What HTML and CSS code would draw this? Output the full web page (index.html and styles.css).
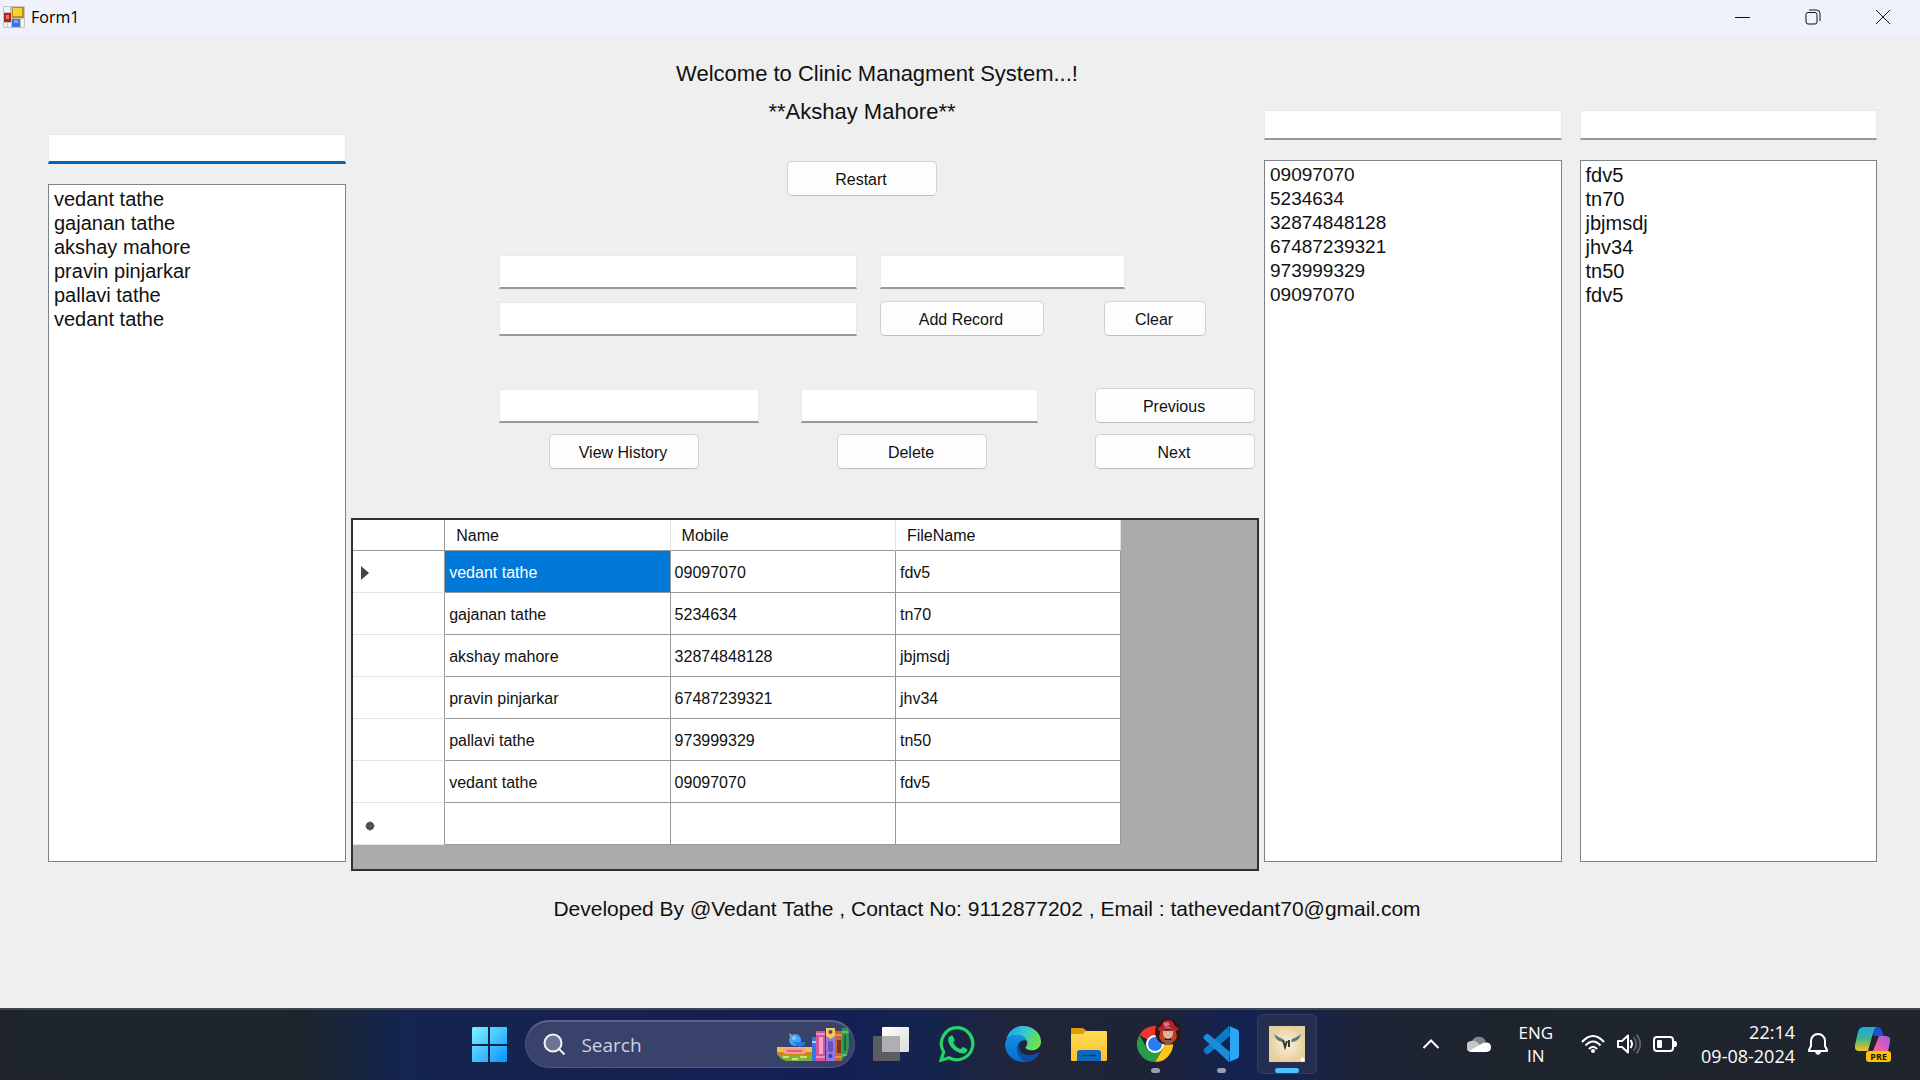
FILE: index.html
```
<!DOCTYPE html>
<html lang="en">
<head>
<meta charset="utf-8">
<meta name="viewport" content="width=device-width, initial-scale=1">
<title>Form1</title>
<link rel="stylesheet" href="styles.css">
</head>
<body>
<header class="titlebar">
  <svg class="app-icon" viewBox="0 0 22 22" aria-hidden="true">
    <rect width="22" height="22" rx="1" fill="#c3c5c8"/>
    <rect x="1" y="1" width="6" height="5" fill="#eef1f5"/>
    <rect x="1" y="7" width="7" height="9" fill="#b3251c"/><rect x="3" y="9" width="3" height="4" fill="#e07868"/>
    <rect x="9" y="1" width="12" height="11" fill="#c98a10"/><rect x="10" y="2" width="9" height="8" fill="#fbd033"/>
    <rect x="9" y="13" width="8" height="8" fill="#3f74d8"/><rect x="11" y="14" width="4" height="3" fill="#79a8f2"/>
    <rect x="1" y="17" width="3" height="4" fill="#eef1f5"/><rect x="5" y="17" width="3" height="4" fill="#eef1f5"/>
    <rect x="18" y="13" width="3" height="8" fill="#eef1f5"/>
  </svg>
  <h1 class="window-title">Form1</h1>
  <div class="window-controls">
    <button class="window-button" type="button" aria-label="Minimize"><svg viewBox="0 0 16 16"><path d="M0 8.500h15"/></svg></button>
    <button class="window-button" type="button" aria-label="Restore"><svg viewBox="0 0 16 16"><rect x="1" y="3.500" width="11" height="11.500" rx="2"/><path d="M4 1h7.500a3.500 3.500 0 0 1 3.500 3.500V12"/></svg></button>
    <button class="window-button" type="button" aria-label="Close"><svg viewBox="0 0 16 16"><path d="M1 1l14 14M15 1L1 15"/></svg></button>
  </div>
</header>

<main class="form">
  <div class="panels">
    <section class="search-list search-list-name">
      <input class="field field-search field-active" type="text" aria-label="Search name">
      <select class="listbox" size="20" aria-label="Names">
        <option>vedant tathe</option><option>gajanan tathe</option><option>akshay mahore</option>
        <option>pravin pinjarkar</option><option>pallavi tathe</option><option>vedant tathe</option>
      </select>
    </section>

    <section class="center">
      <div class="controls">
        <h2 class="heading">Welcome to Clinic Managment System...!</h2>
        <div class="intro">
          <p class="heading">**Akshay Mahore**</p>
          <button class="button button-restart" type="button">Restart</button>
        </div>
        <div class="row row-record">
          <input class="field" type="text" aria-label="Name">
          <input class="field" type="text" aria-label="File name">
        </div>
        <div class="row row-add">
          <input class="field" type="text" aria-label="Mobile">
          <button class="button" type="button">Add Record</button>
          <button class="button" type="button">Clear</button>
        </div>
        <div class="row row-lookup">
          <input class="field" type="text" aria-label="History of">
          <input class="field" type="text" aria-label="Record to delete">
          <button class="button" type="button">Previous</button>
        </div>
        <div class="row row-actions">
          <button class="button" type="button">View History</button>
          <button class="button" type="button">Delete</button>
          <button class="button" type="button">Next</button>
        </div>
      </div>

      <div class="datagrid">
        <table class="records">
          <colgroup><col class="col-marker"><col><col><col></colgroup>
          <thead><tr><th></th><th scope="col">Name</th><th scope="col">Mobile</th><th scope="col">FileName</th></tr></thead>
          <tbody>
            <tr><th scope="row"><svg class="marker" viewBox="0 0 8 14" aria-label="Current row"><path d="M0 0l8 7-8 7z"/></svg></th><td class="selected">vedant tathe</td><td>09097070</td><td>fdv5</td></tr>
            <tr><th></th><td>gajanan tathe</td><td>5234634</td><td>tn70</td></tr>
            <tr><th></th><td>akshay mahore</td><td>32874848128</td><td>jbjmsdj</td></tr>
            <tr><th></th><td>pravin pinjarkar</td><td>67487239321</td><td>jhv34</td></tr>
            <tr><th></th><td>pallavi tathe</td><td>973999329</td><td>tn50</td></tr>
            <tr><th></th><td>vedant tathe</td><td>09097070</td><td>fdv5</td></tr>
            <tr><th scope="row"><svg class="marker marker-new" viewBox="0 0 10 10" aria-label="New row"><circle cx="5" cy="5" r="4"/><path d="M5 0v10M0 5h10" stroke="#666" fill="none"/></svg></th><td></td><td></td><td></td></tr>
          </tbody>
        </table>
      </div>
    </section>

    <div class="list-pair">
      <section class="search-list">
        <input class="field field-search" type="text" aria-label="Search mobile">
        <select class="listbox listbox-numbers" size="20" aria-label="Mobiles">
          <option>09097070</option><option>5234634</option><option>32874848128</option>
          <option>67487239321</option><option>973999329</option><option>09097070</option>
        </select>
      </section>
      <section class="search-list">
        <input class="field field-search" type="text" aria-label="Search file name">
        <select class="listbox" size="20" aria-label="File names">
          <option>fdv5</option><option>tn70</option><option>jbjmsdj</option>
          <option>jhv34</option><option>tn50</option><option>fdv5</option>
        </select>
      </section>
    </div>
  </div>
  <p class="credits">Developed By @Vedant Tathe , Contact No: 9112877202 , Email : tathevedant70@gmail.com</p>
</main>

<footer class="taskbar">
  <nav class="apps" aria-label="Taskbar">
    <button class="app" type="button" aria-label="Start">
      <svg viewBox="0 0 36 36"><defs><linearGradient id="win" x1="0" y1="0" x2="1" y2="1"><stop offset="0" stop-color="#7df3ff"/><stop offset="1" stop-color="#0a94ff"/></linearGradient></defs>
      <path fill="url(#win)" d="M2 1h15v17H1V2zM19 1h16a1 1 0 0 1 1 1v16H19zM1 20h16v16H2a1 1 0 0 1-1-1zM19 20h17v15a1 1 0 0 1-1 1H19z"/></svg>
    </button>
    <label class="search">
      <svg class="search-icon" viewBox="0 0 24 24"><circle cx="10" cy="10" r="8.500" fill="#6c7494"/><path d="M16 16l5.500 5.500"/></svg>
      <input class="search-input" type="text" placeholder="Search" aria-label="Search">
      <svg class="search-art" viewBox="0 0 73 34" aria-hidden="true">
        <path d="M0 19h35v8H0z" fill="#f3c04b"/><path d="M0 24h35v3H0z" fill="#c98320"/><rect x="6" y="20" width="23" height="6" rx="3" fill="#f49b94"/><rect x="10" y="22" width="15" height="2" fill="#d96767"/>
        <path d="M1 27h34v6H10Q4 32 1 27z" fill="#7fb23a"/><path d="M6 29h6M15 31h6M23 29h7" stroke="#cfe56a" stroke-width="2"/>
        <path d="M12 5l6 4-4 3z" fill="#f39a2b"/><circle cx="18" cy="12" r="6" fill="#3fa4f5"/><path d="M16 14h12v3l-6 2z" fill="#1f7de0"/><circle cx="17" cy="10" r="2" fill="#84cbff"/>
        <rect x="35" y="9" width="4" height="24" fill="#3778df"/><rect x="35" y="13" width="4" height="2" fill="#a8cdff"/>
        <rect x="39" y="3" width="9" height="30" fill="#d4579c"/><rect x="42" y="9" width="4" height="17" fill="#f5a6cf"/><path d="M39 6h9M39 29h9" stroke="#f6d0e3"/>
        <rect x="49" y="0" width="9" height="33" fill="#9277e6"/><path d="M49 0h9v8l-4.500 3-4.500-3z" fill="#f6cb4f"/><rect x="51" y="13" width="5" height="11" rx="2" fill="#6b50bf"/><circle cx="53.500" cy="4" r="2" fill="#5a3f9a"/><circle cx="53.500" cy="28" r="2" fill="#4c358c"/>
        <rect x="58" y="3" width="7" height="30" fill="#c8692d"/><rect x="60" y="12" width="4" height="13" fill="#7c3a17"/><path d="M58 7h7M58 29h7" stroke="#f4b66c"/>
        <path d="M65 0h6q2 14 0 25l-6 7z" fill="#2f9653"/><path d="M65 4h7M65 27h5" stroke="#a4dca7"/><path d="M67 7h2v16h-2z" fill="#1a6a38"/>
      </svg>
    </label>
    <button class="app" type="button" aria-label="Task view">
      <svg viewBox="0 0 36 36"><defs><linearGradient id="tv" x1="0" y1="0" x2="1" y2="1"><stop offset="0" stop-color="#fff"/><stop offset="1" stop-color="#dcdcdc"/></linearGradient></defs>
      <rect x="0" y="10" width="27" height="25" rx="1" fill="#5c5d60"/><rect x="9" y="1" width="27" height="25" rx="1" fill="url(#tv)"/><path d="M9 10h18v16H9z" fill="#aeafb2"/></svg>
    </button>
    <button class="app" type="button" aria-label="WhatsApp">
      <svg viewBox="0 0 36 36"><path d="M18.500 1.700A16 16 0 0 0 4.700 26L2 34.200l8.300-2.400A16 16 0 1 0 18.500 1.700z" fill="none" stroke="#25d366" stroke-width="3.200"/>
      <path fill="#25d366" d="M9.500 12c1-2.500 3.700-3.400 4.600-1.500l1.500 3.600c.3.900-1.600 2.400-1.200 3 1.600 3 3.900 5 7 6 .8.200 2-2.400 2.800-2l3.800 1.800c1.200.7-.4 3.800-2.700 4.500-3 .8-8.600-1.500-12-5.100-3.300-3.600-4.800-7.800-3.800-10.300z"/></svg>
    </button>
    <button class="app" type="button" aria-label="Edge">
      <svg viewBox="0 0 36 36"><defs><linearGradient id="ea" x1="0" y1="0" x2="1" y2=".4"><stop offset="0" stop-color="#2195e0"/><stop offset=".5" stop-color="#31c4d8"/><stop offset="1" stop-color="#6be34b"/></linearGradient><linearGradient id="eb" x1="0" y1="0" x2="0" y2="1"><stop offset="0" stop-color="#1391e3"/><stop offset="1" stop-color="#0a6bce"/></linearGradient></defs>
      <path fill="url(#ea)" d="M1 14C3 5.500 9.500 0 18 0c10.500 0 18 7.300 18 15.500 0 5.500-4 8.800-9 8.800-4 0-6.500-1.300-6.500-2.700 0-1 1.800-1.700 1.800-4.600C22 13 18 9 12 9 7 9 3 11 1 14z"/>
      <path fill="url(#eb)" d="M0 18C.5 12.500 5.500 8.700 12 8.700c5 0 8.400 2.700 9.700 5.600C16 13.500 12.500 17 12.500 22c0 6 4 11.500 9 13.500-1 .3-2.200.5-3.500.5C8 36 0 28 0 18z"/>
      <path fill="#0f4f9f" d="M14.600 17.500c-2.600 7 4.400 13 12 11.500 3-.6 5-2 6.800-2.800 1-.4 1.300.4.900 1.200C32 32 27 36 21 36c-5-1.500-9.500-7-9-13 .2-2.400 1.200-4.300 2.600-5.500z"/></svg>
    </button>
    <button class="app" type="button" aria-label="File Explorer">
      <svg viewBox="0 0 36 36"><defs><linearGradient id="fo" x1="0" y1="0" x2="0" y2="1"><stop offset="0" stop-color="#ffdb58"/><stop offset="1" stop-color="#fdc02b"/></linearGradient></defs>
      <path fill="#e09d00" d="M0 3a1 1 0 0 1 1-1h10q2 0 3 1.500L16 6v8H0z"/><path fill="url(#fo)" d="M0 8h12l3-3h20a1 1 0 0 1 1 1v28a1 1 0 0 1-1 1H1a1 1 0 0 1-1-1z"/><path fill="#0b69bd" d="M6 35V27q0-3 3-3h18q3 0 3 3v8z"/><path d="M11 29.500h14" stroke="#053f78" stroke-width="1.500"/></svg>
    </button>
    <button class="app app-open" type="button" aria-label="Chrome">
      <svg viewBox="0 0 36 36"><path fill="#e8382c" d="M18 18L2.400 9A18 18 0 0 1 33.600 9z"/><path fill="#fcc417" d="M18 18V9h15.600A18 18 0 0 1 18 36l7.800-13.500z"/><path fill="#2a9b46" d="M2.400 9l7.800 13.500L18 27l7.800-4.500L18 36A18 18 0 0 1 2.400 9z"/><circle cx="18" cy="18" r="9" fill="#fff"/><circle cx="18" cy="18" r="7" fill="#2f7cf0"/></svg>
      <svg class="profile" viewBox="0 0 26 26"><circle cx="13" cy="13" r="13" fill="#2c1714"/><path fill="#ad2330" d="M2 9q5-1 6-6 5-4 10 0 1 5 6 6-2 5-11 5T2 9z"/><path fill="#ee7180" d="M8 4l5-1 2 3-5 2z"/><path d="M6 11q-4 7 1 12l3 1V13zM20 11q4 7-1 12l-3 1V13z" fill="#c53f19"/><ellipse cx="13" cy="14" rx="5" ry="6" fill="#dfb29c"/><path d="M9 10q4-2 8 0v2H9z" fill="#7a2522"/><path d="M8 21h10l-2 5h-6z" fill="#8c5a4c"/></svg>
    </button>
    <button class="app app-open" type="button" aria-label="Visual Studio Code">
      <svg viewBox="0 0 36 36"><path d="M26 0L1 23q-1 1.500 0 3l2 1.700q1.300 1 2.800 0L27 10z" fill="#0a7bc9"/><path d="M26 36L1 13q-1.200-1.500 0-3l2-1.700q1.200-1 2.600 0L27 26z" fill="#1a8cd8"/><path fill="#2ba5f5" d="M26 0l8.500 3.500Q36 4.500 36 6v24q0 1.500-1.500 2.500L26 36q1-1 1-3V3q0-2-1-3z"/></svg>
    </button>
    <button class="app app-current" type="button" aria-label="Form1">
      <svg viewBox="0 0 36 36"><defs><radialGradient id="tile"><stop offset="0" stop-color="#fbf1da"/><stop offset="1" stop-color="#e9cf9e"/></radialGradient></defs>
      <rect width="36" height="36" fill="url(#tile)"/><path fill="#557a8a" d="M5 8q5 4 9 5l1 3q-8 0-10-8zM32 8q-5 4-9 5l-1 3q8 0 10-8z"/><path d="M14 14l2 7 2-6M20 14v7" fill="none" stroke="#38352f" stroke-width="2"/><circle cx="33.500" cy="33.500" r="2" fill="#fff"/></svg>
    </button>
  </nav>

  <div class="tray">
    <button class="tray-button" type="button" aria-label="Show hidden icons"><svg class="icon-chevron" viewBox="0 0 18 12"><path d="M1.500 10L9 2.500l7.500 7.500" fill="none" stroke="#fff" stroke-width="2"/></svg></button>
    <button class="tray-button tray-cloud" type="button" aria-label="OneDrive"><svg class="icon-cloud" viewBox="0 0 24 16"><path fill="#85878b" d="M5 5a7.500 7.500 0 0 1 14 1l-6 5-8-1z"/><path fill="#c6c7c9" d="M5 16a5.300 5.300 0 0 1-1-11q3-1 6 1l9 10z"/><path fill="#fff" d="M2 15l14-8q8-2 8 4.500 0 4-4.500 4.500H5q-2 0-3-1z"/></svg></button>
    <button class="tray-button tray-language" type="button">ENG<br>IN</button>
    <button class="tray-button tray-status" type="button" aria-label="Network, volume and battery">
      <svg class="icon-status" viewBox="0 0 24 20"><g fill="none" stroke="#fff" stroke-width="2"><path d="M1 8q11-12 22 0M4.500 11.500q7.500-8 15 0M8 15q4-4.500 8 0"/></g><circle cx="12" cy="17" r="2" fill="#fff"/></svg>
      <svg class="icon-status" viewBox="0 0 24 20"><path d="M1 7h4l6-5.500v17L5 13H1z" fill="none" stroke="#fff" stroke-width="2" stroke-linejoin="round"/><path d="M13.500 6q3 4 0 8" fill="none" stroke="#fff" stroke-width="2"/><path d="M16.500 3q5.500 7 0 14M19.500 .5q7.500 9.500 0 19" fill="none" stroke="#5b5f67" stroke-width="2"/></svg>
      <svg class="icon-status" viewBox="0 0 24 20"><rect x="1" y="3" width="19" height="14" rx="3" fill="none" stroke="#fff" stroke-width="2"/><rect x="4" y="6" width="5" height="8" rx="1" fill="#fff"/><path d="M21 7h1q2 0 2 3t-2 3h-1z" fill="#fff"/></svg>
    </button>
    <button class="tray-button tray-clock" type="button">22:14<br>09-08-2024</button>
    <button class="tray-button tray-bell" type="button" aria-label="Notifications"><svg class="icon-bell" viewBox="0 0 20 22"><path d="M10 1a7 7 0 0 0-7 7v5l-2 4v1h18v-1l-2-4V8a7 7 0 0 0-7-7z" fill="none" stroke="#fff" stroke-width="2" stroke-linejoin="round"/><path d="M7 19h6q-1 3-3 3t-3-3z" fill="#fff"/></svg></button>
    <button class="tray-button tray-copilot" type="button" aria-label="Copilot preview">
      <svg class="icon-copilot" viewBox="0 0 36 36"><defs><linearGradient id="ca" x1="0" y1="0" x2="0" y2="1"><stop offset="0" stop-color="#1aa7ec"/><stop offset=".5" stop-color="#43b68a"/><stop offset="1" stop-color="#f5c51b"/></linearGradient><linearGradient id="cb" x1="1" y1="0" x2="0" y2="1"><stop offset="0" stop-color="#a259f0"/><stop offset=".6" stop-color="#ec5fa0"/><stop offset="1" stop-color="#fb8b54"/></linearGradient></defs>
      <path fill="#1e4fd0" d="M13 1h9q4 0 5 4l2 5H19z"/><path fill="url(#ca)" d="M9 1h12q-2 2-3 6l-5 18H4q-5 0-4-6L3 6q1-5 6-5z"/><path fill="url(#cb)" d="M24 10h7q5 0 4 6l-3 14H16z"/></svg>
      <span class="preview-badge">PRE</span>
    </button>
  </div>
</footer>
</body>
</html>
```
FILE: styles.css
```
* { box-sizing: border-box; }

body {
  margin: 0;
  min-height: 100vh;
  display: flex;
  flex-direction: column;
  background: #efefef;
  color: #111;
  font-family: "Liberation Sans", Arial, sans-serif;
  font-size: 16px;
}

h1, h2, p { margin: 0; font-weight: 400; }
button, input, select { font: inherit; color: inherit; border-radius: 0; }
svg { display: block; }

/* Title bar */
.titlebar {
  display: flex;
  align-items: center;
  height: 36px;
  padding: 0 2px 2px 3px;
  background: #eff2fa;
  font-family: "Open Sans", "Noto Sans", sans-serif;
}
.app-icon { width: 22px; height: 22px; margin-right: 6px; }
.window-title { font-size: 16px; line-height: 24px; color: #000; }
.window-controls { display: flex; margin-left: auto; }
.window-button {
  display: grid;
  place-items: center;
  width: 70px;
  height: 32px;
  padding: 0;
  border: 0;
  background: none;
}
.window-button svg { width: 16px; height: 16px; fill: none; stroke: #111; stroke-width: 1; }

/* Form body */
.form { flex: 1; }
.panels {
  display: grid;
  grid-template-columns: 298fr 908fr 613fr;
  column-gap: 5px;
  padding: 0 43px 0 48px;
}
.list-pair { display: grid; grid-template-columns: 1fr 1fr; column-gap: 18px; }
.search-list {
  display: flex;
  flex-direction: column;
  gap: 20px;
  padding: 74px 0 9px;
}
.search-list-name { padding-top: 98px; }

.field {
  width: 100%;
  min-width: 0;
  height: 34px;
  padding: 0 6px;
  border: 1px solid #e9e9e9;
  border-bottom: 2px solid #999;
  background: #fff;
  outline: none;
}
.field-search { height: 30px; }
.field-active { border-bottom: 3px solid #0067c0; }

.listbox {
  flex: 1;
  width: 100%;
  min-height: 0;
  padding: 3px;
  border: 1px solid #7d838d;
  background: #fff;
  font-size: 20px;
  overflow: hidden;
  outline: none;
}
.listbox-numbers { font-size: 19px; }
.listbox option { height: 24px; min-height: 24px; padding: 0 2px; line-height: 24px; }

/* Middle column */
.controls { padding: 23px 4px 49px 148px; }
.heading { font-size: 22px; line-height: 30px; text-align: center; }
.intro {
  display: flex;
  flex-direction: column;
  align-items: center;
  gap: 34px;
  padding: 8px 30px 59px 0;
}
.button {
  min-width: 0;
  height: 35px;
  padding: 2px 2px 0 0;
  border: 1px solid #d2d2d2;
  border-bottom-color: #bdbdbd;
  border-radius: 5px;
  background: #fdfdfd;
}
.button-restart { width: 150px; }
.row { display: grid; align-items: center; }
.row-record { grid-template-columns: 358fr 23fr 245fr 130fr; }
.row-record .field:nth-child(2) { grid-column: 3; }
.row-add { grid-template-columns: 358fr 23fr 164fr 60fr 102fr 49fr; margin: 12px 0 52px; }
.row-add .button:nth-child(2) { grid-column: 3; }
.row-add .button:nth-child(3) { grid-column: 5; }
.row-lookup { grid-template-columns: 260fr 42fr 237fr 57fr 160fr; }
.row-lookup .field:nth-child(2) { grid-column: 3; }
.row-lookup .button { grid-column: 5; }
.row-actions { grid-template-columns: 50fr 150fr 138fr 150fr 108fr 160fr; margin-top: 11px; }
.row-actions .button:nth-child(1) { grid-column: 2; }
.row-actions .button:nth-child(2) { grid-column: 4; }
.row-actions .button:nth-child(3) { grid-column: 6; }

/* Records grid */
.datagrid {
  padding-bottom: 24px;
  border: 2px solid #303030;
  background: #ababab;
}
.records {
  width: 85%;
  table-layout: fixed;
  border-collapse: separate;
  border-spacing: 0;
}
.col-marker { width: 12%; }
.records th, .records td {
  height: 42px;
  padding: 2px 0 0 4px;
  border: solid #999;
  border-width: 0 1px 1px 0;
  background: #fff;
  font-weight: 400;
  text-align: left;
}
.records thead th { height: 31px; padding-left: 11px; border-right-color: #e2e2e2; }
.records thead th:first-child { border-right-color: #999; }
.records tbody th { padding-left: 8px; border-bottom-color: #e4e4e4; }
.records .selected { background: #0078d7; color: #fff; }
.marker { width: 8px; height: 14px; fill: #444; }
.marker-new { width: 10px; height: 10px; margin: 2px 0 0 4px; }

.credits {
  padding: 25px 0 27px 54px;
  font-size: 21px;
  line-height: 26px;
  text-align: center;
}

/* Taskbar */
.taskbar {
  display: grid;
  grid-template-columns: 459fr auto 602fr;
  height: 72px;
  border-top: 2px solid #42464f;
  background: linear-gradient(90deg, #1f242c 0%, #1c252e 16%, #14254f 21%, #16224f 30%, #141f55 43%, #14244f 48%, #20253a 53%, #1f2336 60%, #14224f 64%, #14224f 67%, #1e2436 71%, #1e242e 78%, #1f242d 100%);
  color: #fff;
  font-family: "Open Sans", "Noto Sans", sans-serif;
}
.apps {
  grid-column: 2;
  display: flex;
  align-items: center;
  gap: 6px;
  padding-bottom: 2px;
}
.app {
  position: relative;
  display: grid;
  place-items: center;
  width: 60px;
  height: 60px;
  padding: 0;
  border: 1px solid transparent;
  border-radius: 6px;
  background: none;
}
.app > svg { width: 36px; height: 36px; }
.app-current { border-color: #343f60; background: #232e50; }
.app-open::after, .app-current::after {
  content: "";
  position: absolute;
  bottom: 0;
  width: 9px;
  height: 5px;
  border-radius: 3px;
  background: #9a9eac;
}
.app-current::after { width: 24px; background: #4cc2ff; }
.app > .profile { position: absolute; top: 4px; right: 3px; width: 26px; height: 26px; }
.search {
  display: flex;
  align-items: center;
  width: 330px;
  height: 48px;
  padding: 0 4px 0 17px;
  border: 1px solid #4c567a;
  border-top: 2px solid #5b6488;
  border-radius: 24px;
  background: #39426b;
}
.search-icon { width: 24px; height: 24px; fill: none; stroke: #f2f3f6; stroke-width: 2; }
.search-input {
  flex: 1;
  min-width: 0;
  padding: 0 0 0 14px;
  border: 0;
  background: none;
  font-size: 19px;
  outline: none;
}
.search-input::placeholder { color: #ced3e2; opacity: 1; }
.search-art { width: 73px; height: 34px; }

.tray {
  display: flex;
  align-items: center;
  justify-content: flex-end;
  padding: 0 29px 2px 0;
}
.tray-button { padding: 0; border: 0; background: none; font-size: 18px; line-height: 24px; }
.icon-chevron { width: 18px; height: 12px; }
.tray-cloud { margin-left: 27px; }
.icon-cloud { width: 24px; height: 16px; }
.tray-language { margin-left: 27px; font-size: 17px; line-height: 23px; }
.tray-status { display: flex; gap: 12px; margin-left: 28px; }
.icon-status { width: 24px; height: 20px; }
.tray-clock { margin-left: 24px; text-align: right; }
.tray-bell { margin-left: 13px; }
.icon-bell { width: 20px; height: 22px; }
.tray-copilot { position: relative; margin-left: 27px; }
.icon-copilot { width: 36px; height: 36px; }
.preview-badge {
  position: absolute;
  right: 0;
  bottom: 0;
  padding: 0 4px;
  border-radius: 3px;
  background: #ffc20a;
  color: #1b1600;
  font-size: 9px;
  font-weight: 700;
  line-height: 11px;
}
```
